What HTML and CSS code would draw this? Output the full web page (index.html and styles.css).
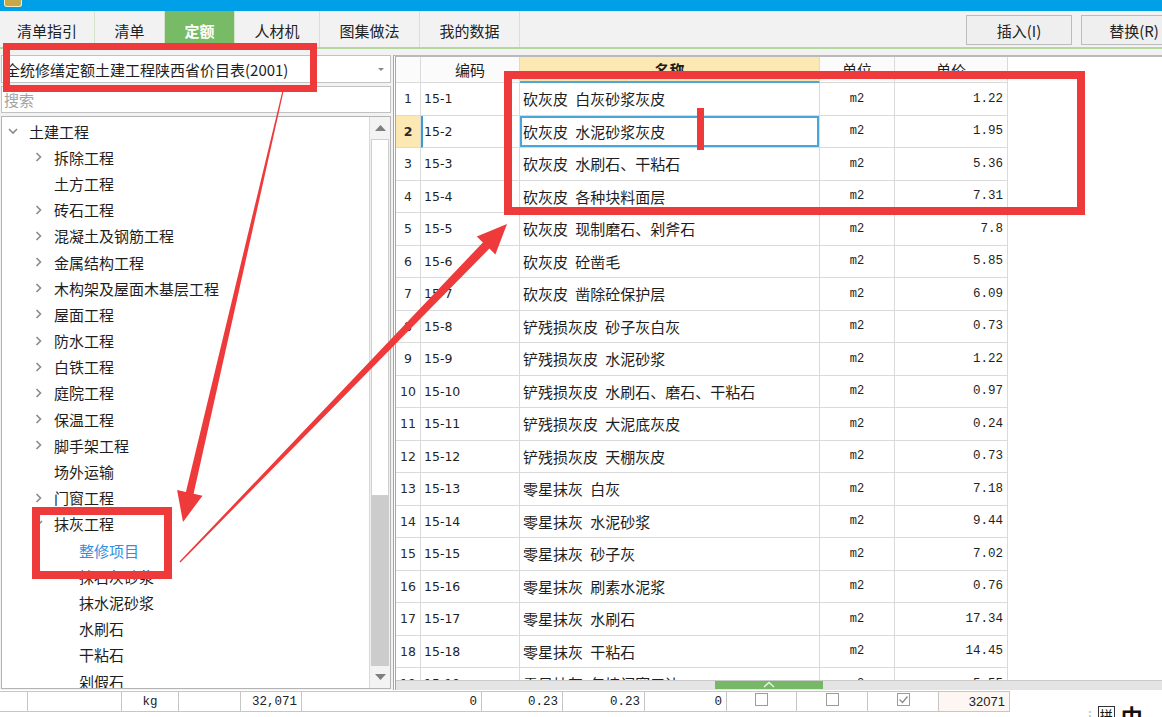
FILE: index.html
```html
<!DOCTYPE html>
<html lang="zh-CN">
<head>
<meta charset="utf-8">
<title>定额</title>
<link rel="stylesheet" href="styles.css">
</head>
<body>
<div class="app">
  <div class="titlebar"><span class="app-icon"></span></div>

  <div class="tabbar">
    <div class="tabs">
      <div class="tab t1">清单指引</div>
      <div class="tab t2">清单</div>
      <div class="tab t3 active">定额</div>
      <div class="tab t4">人材机</div>
      <div class="tab t5">图集做法</div>
      <div class="tab t6">我的数据</div>
    </div>
    <div class="actions">
      <div class="btn">插入(I)</div>
      <div class="btn">替换(R)</div>
    </div>
  </div>

  <div class="main">
    <div class="left">
      <div class="select">
        <span class="select-text">全统修缮定额土建工程陕西省价目表(2001)</span>
        <span class="caret"></span>
      </div>
      <div class="search">搜索</div>
      <div class="tree">
        <div class="tree-list">
          <div class="node lv0"><span class="chev"><svg width="10" height="7" viewBox="0 0 10 7"><path d="M1 1 L5 5 L9 1" class="chev-path"/></svg></span><span>土建工程</span></div>
          <div class="node lv1"><span class="chev"><svg width="7" height="10" viewBox="0 0 7 10"><path d="M1.5 1 L5.5 5 L1.5 9" class="chev-path"/></svg></span><span>拆除工程</span></div>
          <div class="node lv1"><span class="chev"></span><span>土方工程</span></div>
          <div class="node lv1"><span class="chev"><svg width="7" height="10" viewBox="0 0 7 10"><path d="M1.5 1 L5.5 5 L1.5 9" class="chev-path"/></svg></span><span>砖石工程</span></div>
          <div class="node lv1"><span class="chev"><svg width="7" height="10" viewBox="0 0 7 10"><path d="M1.5 1 L5.5 5 L1.5 9" class="chev-path"/></svg></span><span>混凝土及钢筋工程</span></div>
          <div class="node lv1"><span class="chev"><svg width="7" height="10" viewBox="0 0 7 10"><path d="M1.5 1 L5.5 5 L1.5 9" class="chev-path"/></svg></span><span>金属结构工程</span></div>
          <div class="node lv1"><span class="chev"><svg width="7" height="10" viewBox="0 0 7 10"><path d="M1.5 1 L5.5 5 L1.5 9" class="chev-path"/></svg></span><span>木构架及屋面木基层工程</span></div>
          <div class="node lv1"><span class="chev"><svg width="7" height="10" viewBox="0 0 7 10"><path d="M1.5 1 L5.5 5 L1.5 9" class="chev-path"/></svg></span><span>屋面工程</span></div>
          <div class="node lv1"><span class="chev"><svg width="7" height="10" viewBox="0 0 7 10"><path d="M1.5 1 L5.5 5 L1.5 9" class="chev-path"/></svg></span><span>防水工程</span></div>
          <div class="node lv1"><span class="chev"><svg width="7" height="10" viewBox="0 0 7 10"><path d="M1.5 1 L5.5 5 L1.5 9" class="chev-path"/></svg></span><span>白铁工程</span></div>
          <div class="node lv1"><span class="chev"><svg width="7" height="10" viewBox="0 0 7 10"><path d="M1.5 1 L5.5 5 L1.5 9" class="chev-path"/></svg></span><span>庭院工程</span></div>
          <div class="node lv1"><span class="chev"><svg width="7" height="10" viewBox="0 0 7 10"><path d="M1.5 1 L5.5 5 L1.5 9" class="chev-path"/></svg></span><span>保温工程</span></div>
          <div class="node lv1"><span class="chev"><svg width="7" height="10" viewBox="0 0 7 10"><path d="M1.5 1 L5.5 5 L1.5 9" class="chev-path"/></svg></span><span>脚手架工程</span></div>
          <div class="node lv1"><span class="chev"></span><span>场外运输</span></div>
          <div class="node lv1"><span class="chev"><svg width="7" height="10" viewBox="0 0 7 10"><path d="M1.5 1 L5.5 5 L1.5 9" class="chev-path"/></svg></span><span>门窗工程</span></div>
          <div class="node lv1"><span class="chev"><svg width="10" height="7" viewBox="0 0 10 7"><path d="M1 1 L5 5 L9 1" class="chev-path"/></svg></span><span>抹灰工程</span></div>
          <div class="node lv2 selected"><span>整修项目</span></div>
          <div class="node lv2"><span>抹石灰砂浆</span></div>
          <div class="node lv2"><span>抹水泥砂浆</span></div>
          <div class="node lv2"><span>水刷石</span></div>
          <div class="node lv2"><span>干粘石</span></div>
          <div class="node lv2"><span>剁假石</span></div>
        </div>
        <div class="vscroll">
          <div class="sb-btn"><svg width="11" height="6" viewBox="0 0 11 6"><path d="M0 6 L5.5 0 L11 6 Z" class="sb-arrow"/></svg></div>
          <div class="sb-thumb"></div>
          <div class="sb-track"></div>
          <div class="sb-btn"><svg width="11" height="6" viewBox="0 0 11 6"><path d="M0 0 L5.5 6 L11 0 Z" class="sb-arrow"/></svg></div>
        </div>
      </div>
    </div>

    <div class="right">
      <div class="grid">
        <div class="grow ghead">
          <div class="c cn"></div>
          <div class="c cc hc">编码</div>
          <div class="c cm hc hsel">名称</div>
          <div class="c cu hc">单位</div>
          <div class="c cp hc">单价</div>
        </div>
        <div class="gbody">
          <div class="grow"><div class="c cn">1</div><div class="c cc">15-1</div><div class="c cm">砍灰皮 白灰砂浆灰皮</div><div class="c cu">m2</div><div class="c cp">1.22</div></div>
          <div class="grow cur"><div class="c cn">2</div><div class="c cc">15-2</div><div class="c cm">砍灰皮 水泥砂浆灰皮</div><div class="c cu">m2</div><div class="c cp">1.95</div></div>
          <div class="grow"><div class="c cn">3</div><div class="c cc">15-3</div><div class="c cm">砍灰皮 水刷石、干粘石</div><div class="c cu">m2</div><div class="c cp">5.36</div></div>
          <div class="grow"><div class="c cn">4</div><div class="c cc">15-4</div><div class="c cm">砍灰皮 各种块料面层</div><div class="c cu">m2</div><div class="c cp">7.31</div></div>
          <div class="grow"><div class="c cn">5</div><div class="c cc">15-5</div><div class="c cm">砍灰皮 现制磨石、剁斧石</div><div class="c cu">m2</div><div class="c cp">7.8</div></div>
          <div class="grow"><div class="c cn">6</div><div class="c cc">15-6</div><div class="c cm">砍灰皮 砼凿毛</div><div class="c cu">m2</div><div class="c cp">5.85</div></div>
          <div class="grow"><div class="c cn">7</div><div class="c cc">15-7</div><div class="c cm">砍灰皮 凿除砼保护层</div><div class="c cu">m2</div><div class="c cp">6.09</div></div>
          <div class="grow"><div class="c cn">8</div><div class="c cc">15-8</div><div class="c cm">铲残损灰皮 砂子灰白灰</div><div class="c cu">m2</div><div class="c cp">0.73</div></div>
          <div class="grow"><div class="c cn">9</div><div class="c cc">15-9</div><div class="c cm">铲残损灰皮 水泥砂浆</div><div class="c cu">m2</div><div class="c cp">1.22</div></div>
          <div class="grow"><div class="c cn">10</div><div class="c cc">15-10</div><div class="c cm">铲残损灰皮 水刷石、磨石、干粘石</div><div class="c cu">m2</div><div class="c cp">0.97</div></div>
          <div class="grow"><div class="c cn">11</div><div class="c cc">15-11</div><div class="c cm">铲残损灰皮 大泥底灰皮</div><div class="c cu">m2</div><div class="c cp">0.24</div></div>
          <div class="grow"><div class="c cn">12</div><div class="c cc">15-12</div><div class="c cm">铲残损灰皮 天棚灰皮</div><div class="c cu">m2</div><div class="c cp">0.73</div></div>
          <div class="grow"><div class="c cn">13</div><div class="c cc">15-13</div><div class="c cm">零星抹灰 白灰</div><div class="c cu">m2</div><div class="c cp">7.18</div></div>
          <div class="grow"><div class="c cn">14</div><div class="c cc">15-14</div><div class="c cm">零星抹灰 水泥砂浆</div><div class="c cu">m2</div><div class="c cp">9.44</div></div>
          <div class="grow"><div class="c cn">15</div><div class="c cc">15-15</div><div class="c cm">零星抹灰 砂子灰</div><div class="c cu">m2</div><div class="c cp">7.02</div></div>
          <div class="grow"><div class="c cn">16</div><div class="c cc">15-16</div><div class="c cm">零星抹灰 刷素水泥浆</div><div class="c cu">m2</div><div class="c cp">0.76</div></div>
          <div class="grow"><div class="c cn">17</div><div class="c cc">15-17</div><div class="c cm">零星抹灰 水刷石</div><div class="c cu">m2</div><div class="c cp">17.34</div></div>
          <div class="grow"><div class="c cn">18</div><div class="c cc">15-18</div><div class="c cm">零星抹灰 干粘石</div><div class="c cu">m2</div><div class="c cp">14.45</div></div>
          <div class="grow"><div class="c cn">19</div><div class="c cc">15-19</div><div class="c cm">零星抹灰 包墙门窗口边</div><div class="c cu">m2</div><div class="c cp">5.55</div></div>
        </div>
        <div class="splitter">
          <div class="grip"><svg width="12" height="7" viewBox="0 0 12 7"><path d="M1 6 L6 1.5 L11 6" class="grip-path"/></svg></div>
        </div>
      </div>
    </div>
  </div>

  <div class="footrow">
    <div class="f w28"></div>
    <div class="f w94"></div>
    <div class="f w57 ctr">kg</div>
    <div class="f w62"></div>
    <div class="f w61 num">32,071</div>
    <div class="f w180 num">0</div>
    <div class="f w81 num">0.23</div>
    <div class="f w82 num">0.23</div>
    <div class="f w82 num">0</div>
    <div class="f w70 ctr"><span class="cb"></span></div>
    <div class="f w71 ctr"><span class="cb"></span></div>
    <div class="f w71 ctr"><span class="cb"><svg width="11" height="9" viewBox="0 0 11 9"><path d="M1.5 4.5 L4.5 7.5 L9.5 1.5" class="cb-check"/></svg></span></div>
    <div class="f w71 num tint">32071</div>
  </div>

  <div class="ime"><span class="ime-grip">⁝</span><span class="ime-pin">拼</span><span class="ime-zh">中</span></div>

  <div class="mark mark1"></div>
  <div class="mark mark2"></div>
  <div class="mark-bar"></div>
  <div class="mark mark4"></div>
  <svg class="arrows" width="1162" height="717" viewBox="0 0 1162 717">
    <polygon class="arrow" points="283.6,91.1 193.6,493.7 202.5,495.7 183,522 177.1,489.9 185.9,491.9 282.4,90.9"/>
    <polygon class="arrow" points="180.5,562.5 489.4,248.6 495.4,254.6 507,224 476.8,236.6 482.9,242.4 179.5,561.5"/>
  </svg>
</div>
</body>
</html>
```

FILE: styles.css
```css
* { box-sizing: border-box; }

html, body {
  margin: 0;
  padding: 0;
  background: #ffffff;
}

body {
  font-family: "Noto Sans CJK SC", "Noto Sans", "Liberation Sans", sans-serif;
  font-size: 15px;
  color: #1e1e1e;
}

.app {
  position: relative;
  width: 1162px;
  height: 717px;
  overflow: hidden;
  background: #ffffff;
}

/* title bar */
.titlebar {
  height: 11px;
  background: #00a0e8;
  position: relative;
}
.app-icon {
  display: block;
  margin-left: 4px;
  width: 18px;
  height: 7px;
  background: #c8a94a;
  border: 1px solid #f4ecc4;
  border-top: none;
  border-radius: 0 0 3px 3px;
}

/* tab bar */
.tabbar {
  height: 38px;
  display: flex;
  justify-content: space-between;
  background: #f2f2f2;
  border-bottom: 2px solid #b3d99f;
}
.tabs { display: flex; }
.tab {
  display: flex;
  align-items: center;
  justify-content: center;
  border-right: 1px solid #d5e2cc;
  font-size: 15px;
  color: #222;
  padding-top: 3px;
}
.t1 { width: 95px; }
.t2 { width: 70px; }
.t3 { width: 70px; }
.t4 { width: 85px; }
.t5 { width: 100px; }
.t6 { width: 100px; }
.tab.active {
  background: #78bb66;
  color: #ffffff;
  font-weight: bold;
}
.actions {
  display: flex;
  gap: 9px;
  padding-top: 4px;
  margin-right: -25px;
}
.btn {
  width: 106px;
  height: 30px;
  border: 1px solid #bcbcbc;
  background: #efefef;
  display: flex;
  align-items: center;
  justify-content: center;
  font-size: 15px;
  color: #222;
}

/* main */
.main {
  display: flex;
  height: 641px;
}
.left {
  width: 393px;
  padding: 6px 2px 0 1px;
  display: flex;
  flex-direction: column;
  background: #f2f2f2;
}
.select {
  height: 28px;
  border: 1px solid #c2c2c2;
  background: #ffffff;
  display: flex;
  align-items: center;
  justify-content: space-between;
  padding: 0 6px 0 3px;
}
.select-text {
  font-size: 15px;
  white-space: nowrap;
  color: #1e1e1e;
}
.caret {
  width: 0;
  height: 0;
  border-left: 3px solid transparent;
  border-right: 3px solid transparent;
  border-top: 3px solid #888;
}
.search {
  margin-top: 3px;
  height: 27px;
  border: 1px solid #c2c2c2;
  background: #ffffff;
  padding-left: 2px;
  line-height: 25px;
  color: #a3a3a3;
  font-size: 15px;
}
.tree {
  margin-top: 3px;
  height: 573px;
  border: 1px solid #b4b4b4;
  background: #ffffff;
  display: flex;
}
.tree-list {
  flex: 1;
  padding-top: 1px;
  overflow: hidden;
}
.node {
  height: 26.2px;
  display: flex;
  align-items: center;
  white-space: nowrap;
  font-size: 15px;
}
.lv0 { padding-left: 4px; }
.lv1 { padding-left: 29px; }
.lv2 { padding-left: 77px; }
.chev {
  width: 14px;
  margin-right: 9px;
  display: flex;
  align-items: center;
  justify-content: center;
}
.chev-path {
  fill: none;
  stroke: #8a8a8a;
  stroke-width: 1.6;
}
.node.selected { color: #2f8fe0; }

.vscroll {
  width: 21px;
  display: flex;
  flex-direction: column;
  border-left: 1px solid #d8d8d8;
  background: #f0f0f0;
}
.sb-btn {
  height: 22px;
  display: flex;
  align-items: center;
  justify-content: center;
  background: #f3f3f3;
}
.sb-arrow { fill: #7f7f7f; }
.sb-thumb {
  height: 357px;
  background: #ffffff;
  border: 1px solid #cfcfcf;
  margin: 0 1px;
}
.sb-track {
  flex: 1;
  background: #cccccc;
  margin: 0 1px;
}

/* right grid */
.right {
  flex: 1;
  padding-top: 6px;
  background: #f2f2f2;
}
.grid {
  height: 635px;
  border-top: 2px solid #b9b9b9;
  border-left: 3px double #a6a6a6;
  background: #ffffff;
  display: flex;
  flex-direction: column;
}
.grow {
  display: flex;
  height: 32.5px;
  flex-shrink: 0;
}
.ghead { height: 26px; }
.c {
  border-right: 1px solid #dadada;
  border-bottom: 1px solid #dadada;
  display: flex;
  align-items: center;
  white-space: nowrap;
  overflow: hidden;
}
.cn {
  width: 25px;
  justify-content: center;
  font-family: "DejaVu Sans", "Liberation Sans", sans-serif;
  font-size: 12.5px;
  color: #2a2a2a;
}
.cc {
  width: 99px;
  padding-left: 3px;
  font-family: "DejaVu Sans", "Liberation Sans", sans-serif;
  font-size: 12.5px;
  color: #1e1e1e;
}
.cm {
  width: 300px;
  padding-left: 3px;
  font-size: 15px;
  word-spacing: 4px;
}
.cu {
  width: 75px;
  justify-content: center;
  font-family: "Liberation Mono", "DejaVu Sans Mono", monospace;
  font-size: 12px;
}
.cp {
  width: 113px;
  justify-content: flex-end;
  padding-right: 4px;
  font-family: "Liberation Mono", "DejaVu Sans Mono", monospace;
  font-size: 12.5px;
}
.hc {
  justify-content: center;
  padding: 0;
  font-family: "Noto Sans CJK SC", sans-serif;
  font-size: 15px;
  background: #fbfbfb;
}
.ghead .cn { background: #fbfbfb; }
.hc.hsel {
  background: #fce8b2;
  border-bottom: 2px solid #4ea7d8;
  font-weight: bold;
}
.cur .cn {
  background: #fce8b2;
  font-weight: bold;
}
.cur .cc { border-left: 2px solid #3d9ad3; padding-left: 1px; }
.cur .cm { box-shadow: inset 0 0 0 2px #4aa6da; }

.gbody {
  height: 597px;
  overflow: hidden;
}
.splitter {
  height: 10px;
  background: #e4e4e4;
  border-top: 1px solid #c9c9c9;
  padding-left: 319px;
}
.grip {
  width: 108px;
  height: 8px;
  background: #76b865;
  display: flex;
  justify-content: center;
  align-items: flex-start;
}
.grip-path {
  fill: none;
  stroke: #e8f4e3;
  stroke-width: 1.6;
}

/* footer row */
.footrow {
  margin-top: 1px;
  display: flex;
  width: 1010px;
  height: 21px;
  border-top: 1px solid #c6c6c6;
  border-bottom: 1px solid #c6c6c6;
}
.f {
  height: 100%;
  border-right: 1px solid #c6c6c6;
  display: flex;
  align-items: center;
  font-family: "Liberation Mono", "DejaVu Sans Mono", monospace;
  font-size: 12.5px;
  color: #222;
}
.f.num { justify-content: flex-end; padding-right: 4px; }
.f.ctr { justify-content: center; }
.f.tint { background: #fdf6f2; font-family: "Liberation Sans", sans-serif; font-size: 13px; }
.w28 { width: 28px; }
.w94 { width: 94px; }
.w57 { width: 57px; }
.w62 { width: 62px; }
.w61 { width: 61px; }
.w180 { width: 180px; }
.w81 { width: 81px; }
.w82 { width: 82px; }
.w70 { width: 70px; }
.w71 { width: 71px; }
.cb {
  width: 13px;
  height: 13px;
  border: 1px solid #9c9c9c;
  background: #ffffff;
  display: flex;
  align-items: center;
  justify-content: center;
  margin-top: -4px;
}
.cb-check {
  fill: none;
  stroke: #8a8a8a;
  stroke-width: 1.3;
}

/* IME floating indicator */
.ime {
  position: absolute;
  left: 1088px;
  top: 699px;
  display: flex;
  align-items: center;
  gap: 6px;
  color: #111;
}
.ime-grip { color: #bbb; font-size: 14px; }
.ime-pin {
  font-size: 13px;
  border: 1px solid #333;
  padding: 0 1px;
  line-height: 16px;
}
.ime-zh { font-size: 22px; font-weight: bold; }

/* red annotation overlays */
.mark {
  position: absolute;
  border: 8px solid #ee3a3a;
}
.mark1 { left: 3px; top: 43px; width: 314px; height: 49px; border-width: 7px; }
.mark2 { left: 504px; top: 71px; width: 581px; height: 144px; }
.mark4 { left: 32px; top: 507px; width: 140px; height: 72px; }
.mark-bar {
  position: absolute;
  left: 697px;
  top: 108px;
  width: 7px;
  height: 42px;
  background: #ee3a3a;
}
.arrows {
  position: absolute;
  left: 0;
  top: 0;
  pointer-events: none;
}
.arrow { fill: #ee3a3a; }
```
